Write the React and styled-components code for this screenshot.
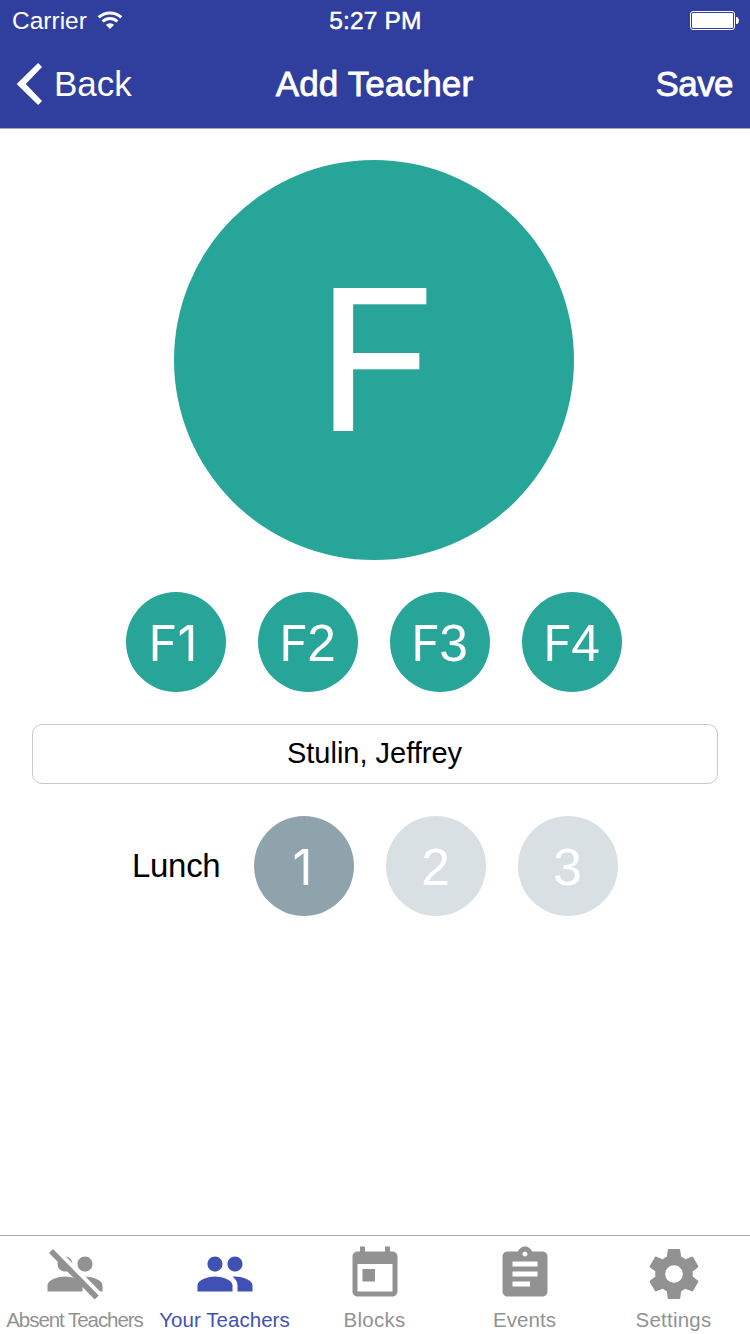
import React from "react";
import styled, { createGlobalStyle } from "styled-components";

const GlobalStyle = createGlobalStyle`
  * { box-sizing: border-box; }
  body {
    margin: 0;
    background: #fff;
    font-family: "Liberation Sans", Arial, sans-serif;
    color: #000;
  }
`;

const Screen = styled.div`
  width: 750px;
  height: 1334px;
  display: flex;
  flex-direction: column;
  overflow: hidden;
`;

const Header = styled.header`
  height: 129px;
  background: #303f9d;
  border-bottom: 1px solid #a7a7aa;
  color: #fff;
`;

const Bar = styled.div`
  display: grid;
  grid-template-columns: 1fr auto 1fr;
  align-items: center;
`;

const StatusBar = styled(Bar)`
  height: 40px;
  padding: 0 11px 0 12px;
  font-size: 24.5px;
  line-height: 42px;

  svg { margin-bottom: 2px; }
`;

const NavBar = styled(Bar)`
  height: 88px;
  padding: 0 17px 0 16px;
  font-size: 35px;
  line-height: 88px;
`;

const Side = styled.div`
  display: flex;
  align-items: center;
  justify-content: ${(p) => (p.$end ? "flex-end" : "flex-start")};
  gap: ${(p) => p.$gap || 0}px;
`;

const Text = styled.span`
  letter-spacing: ${(p) => p.$spacing || 0}px;
  -webkit-text-stroke: ${(p) => p.$weight || 0}px currentColor;
  white-space: nowrap;
`;

const Content = styled.main`
  flex: 1;
  display: flex;
  flex-direction: column;
  align-items: center;
  gap: 32px;
  padding: 31px 32px 0;
`;

const Row = styled.div`
  display: flex;
  align-items: center;
  gap: 32px;
  margin-right: ${(p) => (p.$flush ? 0 : 2)}px;
`;

const Circle = styled.div`
  width: ${(p) => p.$size || 100}px;
  height: ${(p) => p.$size || 100}px;
  border-radius: 50%;
  display: flex;
  align-items: center;
  justify-content: center;
  background: ${(p) => p.$color || "#27a599"};
  color: #fff;
  font-size: 51.5px;
  line-height: 1;
`;

const Glyph = styled.span`
  font-family: Inter, Roboto, sans-serif;
  font-size: 49px;
  line-height: 1;
`;

const BigLetter = styled(Glyph)`
  font-size: 197px;
  transform: scaleX(1.07);
  margin: -2px 0 0 7px;
`;

const Code = styled.span`
  letter-spacing: ${(p) => p.$spacing ?? -1}px;
  margin-left: ${(p) => p.$shift ?? -2}px;
  padding-top: 3px;
`;

const Field = styled.div`
  width: 686px;
  height: 60px;
  border: 1px solid #c9c9c9;
  border-radius: 10px;
  padding-right: 1px;
  font-size: 29px;
  line-height: 57px;
  text-align: center;
`;

const LunchLabel = styled.div`
  width: 90px;
  font-size: 33px;
  line-height: 100px;
`;

const TabBar = styled.nav`
  height: 99px;
  border-top: 1px solid #a9a9a9;
  display: grid;
  grid-template-columns: repeat(4, 150px) 148px;
`;

const Tab = styled.div`
  display: flex;
  flex-direction: column;
  align-items: center;
  padding-top: 8px;
  color: ${(p) => (p.$active ? "#3f51b5" : "#929292")};
  font-size: 20.5px;
  line-height: 32px;

  svg { fill: currentColor; flex: none; }
  span { margin-right: 1px; }
`;

const people =
  "M16 11c1.66 0 2.99-1.34 2.99-3S17.66 5 16 5c-1.66 0-3 1.34-3 3s1.34 3 3 3zm-8 0c1.66 0 2.99-1.34 2.99-3S9.66 5 8 5C6.34 5 5 6.34 5 8s1.34 3 3 3zm0 2c-2.33 0-7 1.17-7 3.5V19h14v-2.5c0-2.33-4.67-3.5-7-3.5zm8 0c-.29 0-.62.02-.97.05 1.16.84 1.97 1.97 1.97 3.45V19h6v-2.5c0-2.33-4.67-3.5-7-3.5z";
const calendar =
  "M19 3h-1V1h-2v2H8V1H6v2H5c-1.11 0-1.99.9-1.99 2L3 19c0 1.1.89 2 2 2h14c1.1 0 2-.9 2-2V5c0-1.1-.9-2-2-2zm0 16H5V8h14v11zM7 10h5v5H7v-5z";
const clipboard =
  "M19 3h-4.18C14.4 1.84 13.3 1 12 1c-1.3 0-2.4.84-2.82 2H5c-1.1 0-2 .9-2 2v14c0 1.1.9 2 2 2h14c1.1 0 2-.9 2-2V5c0-1.1-.9-2-2-2zm-7 0c.55 0 1 .45 1 1s-.45 1-1 1-1-.45-1-1 .45-1 1-1zm2 14H7v-2h7v2zm3-4H7v-2h10v2zm0-4H7V7h10v2z";
const gear =
  "M19.43 12.98c.04-.32.07-.64.07-.98s-.03-.66-.07-.98l2.11-1.65c.19-.15.24-.42.12-.64l-2-3.46c-.12-.22-.39-.3-.61-.22l-2.49 1c-.52-.4-1.08-.73-1.69-.98l-.38-2.65C14.46 2.18 14.25 2 14 2h-4c-.25 0-.46.18-.49.42l-.38 2.65c-.61.25-1.17.59-1.69.98l-2.49-1c-.23-.09-.49 0-.61.22l-2 3.46c-.13.22-.07.49.12.64l2.11 1.65c-.04.32-.07.65-.07.98s.03.66.07.98l-2.11 1.65c-.19.15-.24.42-.12.64l2 3.46c.12.22.39.3.61.22l2.49-1c.52.4 1.08.73 1.69.98l.38 2.65c.03.24.24.42.49.42h4c.25 0 .46-.18.49-.42l.38-2.65c.61-.25 1.17-.59 1.69-.98l2.49 1c.23.09.49 0 .61-.22l2-3.46c.12-.22.07-.49-.12-.64l-2.11-1.65zM12 15.5c-1.93 0-3.5-1.57-3.5-3.5s1.57-3.5 3.5-3.5 3.5 1.57 3.5 3.5-1.57 3.5-3.5 3.5z";

const TabIcon = ({ path, slashed }) => (
  <svg width="60" height="60" viewBox="0 0 24 24">
    <path d={path} />
    {slashed && (
      <>
        <path d="M3 2.27H5.7L23.8 20.8H21z" fill="#fff" />
        <path d="M1.6 3.55L3.2 2L21.5 20.6L19.9 22.2z" />
      </>
    )}
  </svg>
);

const Wifi = () => (
  <svg width="26" height="20" viewBox="0 0 26 20" fill="none" stroke="#fff" strokeWidth="3">
    <path d="M1.7 7.4A16.5 16.5 0 0 1 24.3 7.4" />
    <path d="M5.6 11.5A10.6 10.6 0 0 1 20.4 11.5" />
    <path d="M13 19L8.9 14.8A6 6 0 0 1 17.1 14.8z" fill="#fff" stroke="none" />
  </svg>
);

const Battery = () => (
  <svg width="49" height="20" viewBox="0 0 49 20">
    <rect x="0.5" y="1.5" width="44" height="18" rx="2.5" fill="none" stroke="#fff" />
    <rect x="2" y="3" width="41" height="15" rx="1.2" fill="#fff" />
    <path d="M46 7h1q2 1 2 3.5t-2 3.5h-1z" fill="#fff" />
  </svg>
);

const Chevron = () => (
  <svg width="27" height="44" viewBox="0 0 27 44">
    <path d="M22.1 1L26 4.9L9.8 22L26 39.1L22.1 43L0.7 22z" fill="#fff" />
  </svg>
);

const tabs = [
  { label: "Absent Teachers", path: people, slashed: true, spacing: -1.05 },
  { label: "Your Teachers", path: people, active: true, spacing: 0.05 },
  { label: "Blocks", path: calendar, spacing: 0.25 },
  { label: "Events", path: clipboard, spacing: 0.05 },
  { label: "Settings", path: gear, spacing: 0.25 },
];

export default function App() {
  return (
    <Screen>
      <GlobalStyle />
      <Header>
        <StatusBar>
          <Side $gap={10}>
            <Text>Carrier</Text>
            <Wifi />
          </Side>
          <Text $weight={0.5} $spacing={0.15}>5:27 PM</Text>
          <Side $end>
            <Battery />
          </Side>
        </StatusBar>
        <NavBar>
          <Side $gap={11}>
            <Chevron />
            <Text>Back</Text>
          </Side>
          <Text $weight={0.8} $spacing={0.15}>Add Teacher</Text>
          <Side $end>
            <Text $weight={0.8} $spacing={-0.6}>Save</Text>
          </Side>
        </NavBar>
      </Header>
      <Content>
        <Row>
          <Circle $size={400}>
            <BigLetter>F</BigLetter>
          </Circle>
        </Row>
        <Row>
          <Circle><Code $spacing={0} $shift={-6}><Glyph>F1</Glyph></Code></Circle>
          <Circle><Code><Glyph>F</Glyph>2</Code></Circle>
          <Circle><Code><Glyph>F</Glyph>3</Code></Circle>
          <Circle><Code><Glyph>F</Glyph>4</Code></Circle>
        </Row>
        <Field>
          <Text>Stulin, Jeffrey</Text>
        </Field>
        <Row $flush>
          <LunchLabel>
            <Text $spacing={-0.3}>Lunch</Text>
          </LunchLabel>
          <Circle $color="#8fa3ac"><Code $shift={-4}><Glyph>1</Glyph></Code></Circle>
          <Circle $color="#d8e0e3"><Code>2</Code></Circle>
          <Circle $color="#d8e0e3"><Code>3</Code></Circle>
        </Row>
      </Content>
      <TabBar>
        {tabs.map((t) => (
          <Tab key={t.label} $active={t.active}>
            <TabIcon path={t.path} slashed={t.slashed} />
            <Text $spacing={t.spacing}>{t.label}</Text>
          </Tab>
        ))}
      </TabBar>
    </Screen>
  );
}
